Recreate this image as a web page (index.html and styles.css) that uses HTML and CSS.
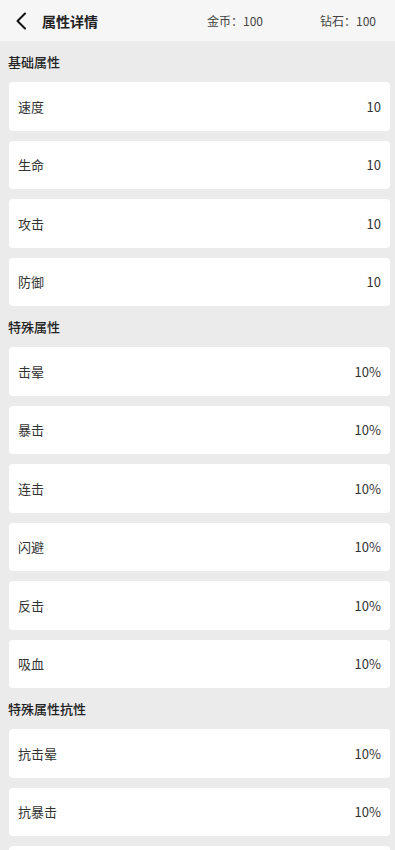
FILE: index.html
```html
<!DOCTYPE html>
<html lang="zh-CN">
<head>
<meta charset="utf-8">
<title>属性详情</title>
<link rel="stylesheet" href="styles.css">
</head>
<body>
<div class="page">
  <header class="topbar">
    <div class="left">
      <svg class="back" width="12" height="18" viewBox="0 0 12 18"><path d="M10 1.5 L2.5 9 L10 16.5" fill="none" stroke="#111" stroke-width="2" stroke-linecap="round" stroke-linejoin="round"/></svg>
      <span class="title">属性详情</span>
    </div>
    <div class="coins">
      <span class="coin">金币：100</span>
      <span class="coin">钻石：100</span>
    </div>
  </header>
  <main class="content">
    <div class="sec-title">基础属性</div>
    <div class="list">
      <div class="card"><span>速度</span><span>10</span></div>
      <div class="card"><span>生命</span><span>10</span></div>
      <div class="card"><span>攻击</span><span>10</span></div>
      <div class="card"><span>防御</span><span>10</span></div>
    </div>
    <div class="sec-title">特殊属性</div>
    <div class="list">
      <div class="card"><span>击晕</span><span>10%</span></div>
      <div class="card"><span>暴击</span><span>10%</span></div>
      <div class="card"><span>连击</span><span>10%</span></div>
      <div class="card"><span>闪避</span><span>10%</span></div>
      <div class="card"><span>反击</span><span>10%</span></div>
      <div class="card"><span>吸血</span><span>10%</span></div>
    </div>
    <div class="sec-title">特殊属性抗性</div>
    <div class="list">
      <div class="card"><span>抗击晕</span><span>10%</span></div>
      <div class="card"><span>抗暴击</span><span>10%</span></div>
      <div class="card"><span>抗连击</span><span>10%</span></div>
    </div>
  </main>
</div>
</body>
</html>
```
FILE: styles.css
```css
html, body {
  margin: 0;
  padding: 0;
  height: 100%;
  overflow: hidden;
}
body {
  font-family: "Noto Sans CJK SC", "Noto Sans", sans-serif;
  background: #ebebeb;
  color: #222;
}
.page {
  width: 395px;
}
.topbar {
  height: 41px;
  background: #f6f6f6;
  display: flex;
  align-items: center;
  justify-content: space-between;
  padding: 0 19px 0 15px;
  box-sizing: border-box;
}
.left {
  display: flex;
  align-items: center;
  gap: 15px;
}
.back {
  display: block;
}
.title {
  font-size: 14px;
  font-weight: 700;
  color: #222;
}
.coins {
  display: flex;
  gap: 57px;
  font-size: 12px;
  color: #444;
}
.content {
  padding: 0 5px 0 9px;
}
.sec-title {
  height: 41px;
  line-height: 41px;
  font-size: 13px;
  font-weight: 500;
  color: #222;
  margin-left: -1px;
}
.list {
  display: flex;
  flex-direction: column;
  gap: 10px;
}
.card {
  height: 48.5px;
  background: #fff;
  border-radius: 4px;
  display: flex;
  align-items: center;
  justify-content: space-between;
  padding: 0 9px 0 9px;
  font-size: 13px;
  color: #333;
}
```
